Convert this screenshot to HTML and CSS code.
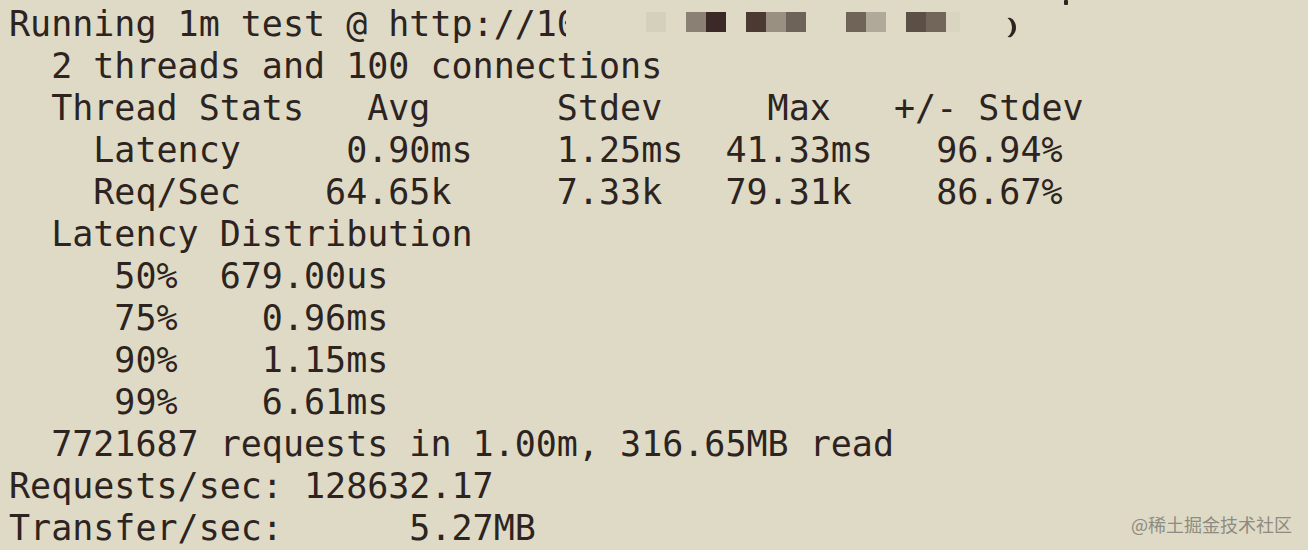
FILE: index.html
```html
<!DOCTYPE html>
<html lang="zh-CN">
<head>
<meta charset="utf-8">
<title>wrk output</title>
<link rel="stylesheet" href="styles.css">
</head>
<body>
<div class="term">
  <div class="line first">Running 1m test @ http://10<div class="mask"><span class="px p1"></span><span class="gap"></span><span class="px p2"></span><span class="px p3"></span><span class="gap"></span><span class="px p4"></span><span class="px p5"></span><span class="px p6"></span><span class="gap2"></span><span class="px p7"></span><span class="px p8"></span><span class="gap"></span><span class="px p9"></span><span class="px p10"></span><span class="px p11"></span><span class="arc"></span></div><span class="speck"></span></div>
  <div class="line">  2 threads and 100 connections</div>
  <div class="line">  Thread Stats   Avg      Stdev     Max   +/- Stdev</div>
  <div class="line">    Latency     0.90ms    1.25ms  41.33ms   96.94%</div>
  <div class="line">    Req/Sec    64.65k     7.33k   79.31k    86.67%</div>
  <div class="line">  Latency Distribution</div>
  <div class="line">     50%  679.00us</div>
  <div class="line">     75%    0.96ms</div>
  <div class="line">     90%    1.15ms</div>
  <div class="line">     99%    6.61ms</div>
  <div class="line">  7721687 requests in 1.00m, 316.65MB read</div>
  <div class="line">Requests/sec: 128632.17</div>
  <div class="line">Transfer/sec:      5.27MB</div>
</div>
<div class="watermark">@稀土掘金技术社区</div>
</body>
</html>
```
FILE: styles.css
```css
html, body {
  margin: 0;
  padding: 0;
  background: #dedac5;
  width: 1308px;
  height: 550px;
  overflow: hidden;
}
body {
  position: relative;
}
.term {
  padding: 3px 0 0 9px;
  font-family: "DejaVu Sans Mono", "Liberation Mono", monospace;
  font-size: 35px;
  line-height: 42px;
  color: #2d231f;
}
.line {
  white-space: pre;
  height: 42px;
}
.first {
  position: relative;
}
.mask {
  position: absolute;
  left: 557px;
  top: 0;
  width: 470px;
  height: 42px;
  background: #dedac5;
  display: flex;
  align-items: flex-start;
  padding-top: 9px;
  padding-left: 80px;
  box-sizing: border-box;
}
.px {
  width: 20px;
  height: 20px;
  flex: none;
}
.gap { width: 20px; flex: none; }
.gap2 { width: 40px; flex: none; }
.p1 { background: #d5d0bb; }
.p2 { background: #8a8074; }
.p3 { background: #3a2926; }
.p4 { background: #4a3a31; }
.p5 { background: #999082; }
.p6 { background: #6e6359; }
.p7 { background: #706459; }
.p8 { background: #b0a999; }
.p9 { background: #5c4f46; }
.p10 { background: #716659; }
.p11 { background: #dad5c0; width: 14px; }
.arc {
  position: absolute;
  left: 426px;
  top: 13px;
  width: 24px;
  height: 23px;
  box-sizing: border-box;
  border-right: 4px solid #2d231f;
  border-top: 1px solid transparent;
  border-bottom: 1px solid transparent;
  border-radius: 50%;
}
.speck {
  position: absolute;
  left: 1055px;
  top: -3px;
  width: 4px;
  height: 5px;
  background: #2d231f;
  border-radius: 1px;
}
.watermark {
  position: absolute;
  right: 16px;
  bottom: 16px;
  font-family: "Noto Sans CJK SC", "Noto Sans", sans-serif;
  font-size: 18px;
  line-height: 20px;
  color: #8d8b82;
}
```
